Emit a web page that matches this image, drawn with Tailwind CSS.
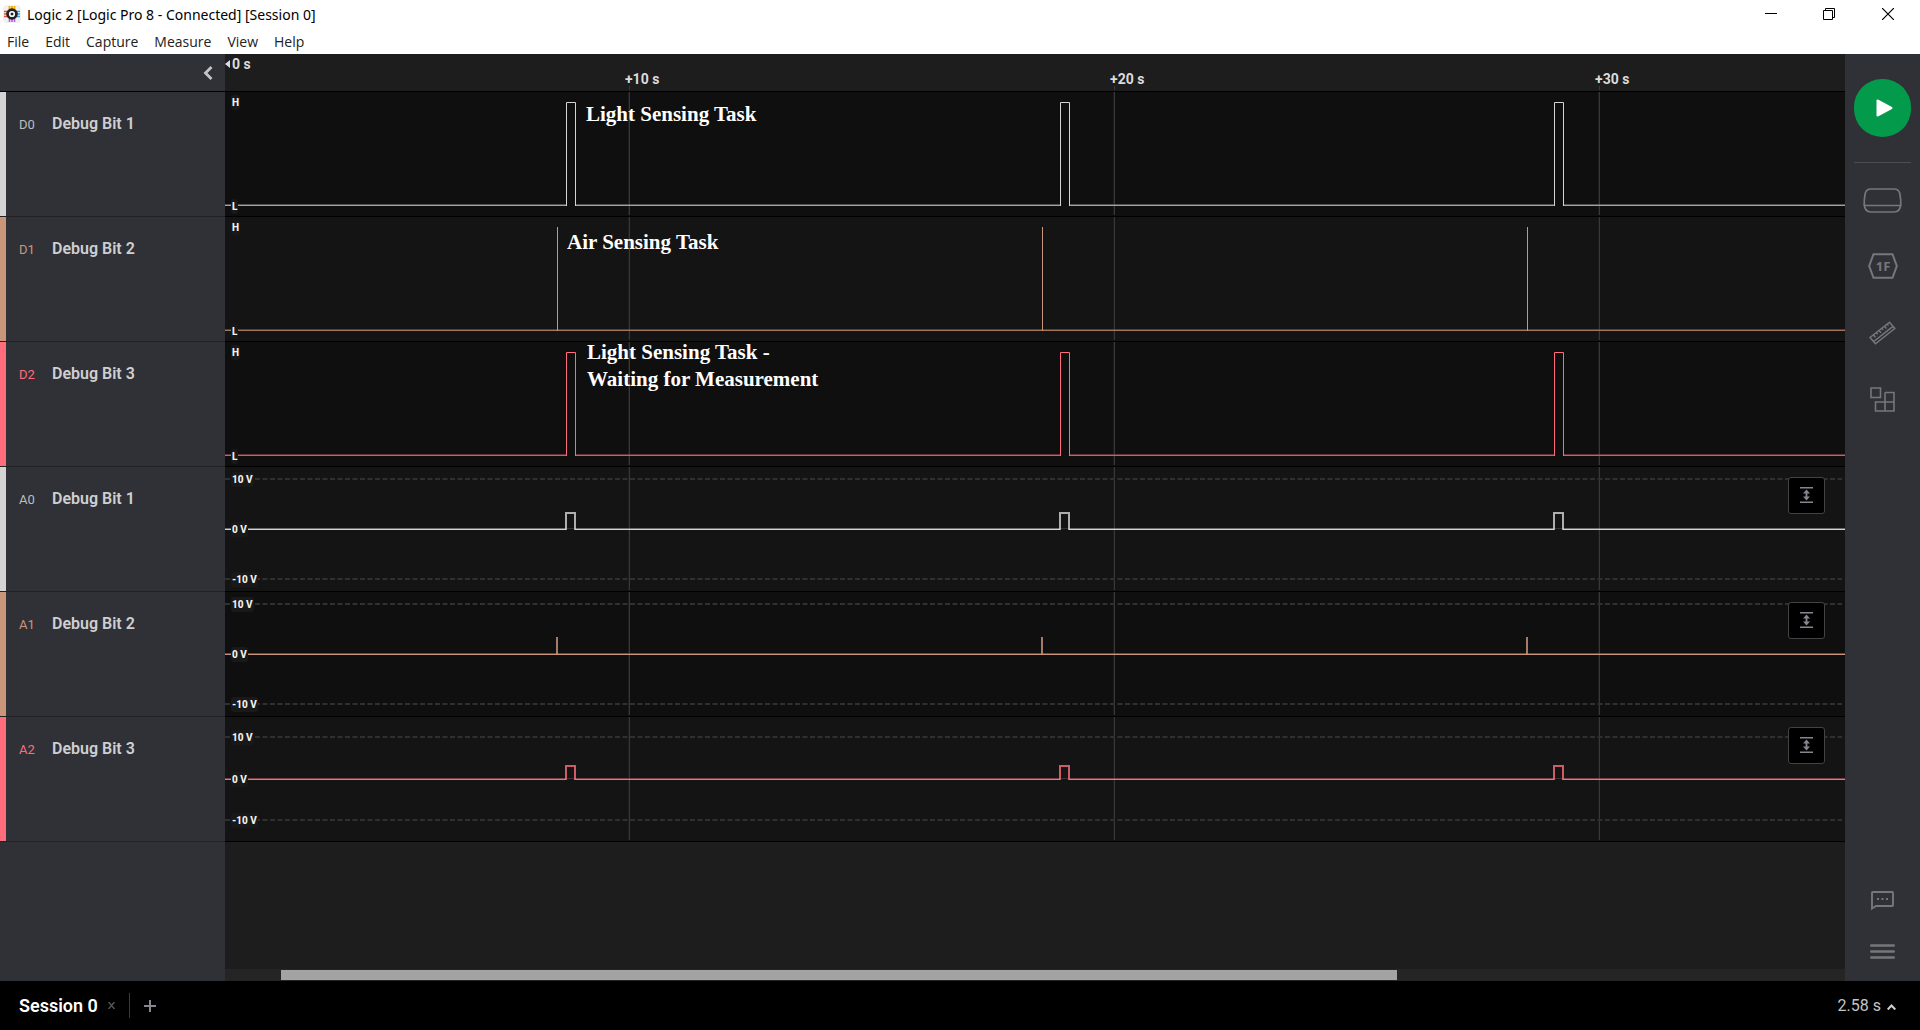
<!DOCTYPE html>
<html lang="en">
<head>
<meta charset="utf-8">
<meta name="viewport" content="width=device-width, initial-scale=1">
<title>Logic 2 [Logic Pro 8 - Connected] [Session 0]</title>
<script src="https://cdn.jsdelivr.net/npm/@tailwindcss/browser@4"></script>
</head>
<body class="flex min-h-screen flex-col overflow-hidden bg-black font-['Roboto',sans-serif] text-[#cfcfd1]">

<!-- Window title bar and menu -->
<header class="bg-white font-['Open_Sans',sans-serif] text-sm text-black">
  <div class="flex h-7 items-center">
    <svg class="ml-[3px] size-[18px]" viewBox="0 0 18 18" aria-hidden="true">
      <rect width="18" height="18" rx="4" fill="#f1f1f4"/>
      <path d="M6.5 1v3M9 1v3M11.500 1v3" stroke="#f2b705" stroke-width="2"/>
      <path d="M6.500 14v3M9 14v3M11.500 14v3" stroke="#b55cf0" stroke-width="1.600"/>
      <path d="M1 6.500h3M1 9h3M1 11.500h3" stroke="#e8503a" stroke-width="1.600"/>
      <path d="M14 6.500h3M14 9h3M14 11.500h3" stroke="#2d9fe8" stroke-width="1.600"/>
      <circle cx="9" cy="9" r="5.800" fill="#222226"/>
      <circle cx="9" cy="9" r="2.300" fill="#222226" stroke="#fff" stroke-width="1.600"/>
    </svg>
    <h1 class="ml-[6px] flex-1 pt-px font-['Noto_Sans',sans-serif]">Logic 2 [Logic Pro 8 - Connected] [Session 0]</h1>
    <button type="button" aria-label="Minimize" class="grid h-7 w-[58px] place-items-center"><svg class="size-3" viewBox="0 0 12 12"><path d="M0 5.500h12" stroke="#000"/></svg></button>
    <button type="button" aria-label="Restore" class="grid h-7 w-[58px] place-items-center"><svg class="size-3" viewBox="0 0 12 12" fill="none" stroke="#000"><path d="M.5 2.500h9v9h-9zM2.500 2.500v-2h9v9h-2"/></svg></button>
    <button type="button" aria-label="Close" class="mr-[2px] grid h-7 w-[60px] place-items-center"><svg class="size-3" viewBox="0 0 12 12" stroke="#000" stroke-width="1.200"><path d="M0 0l12 12M12 0L0 12"/></svg></button>
  </div>
  <nav class="flex h-[26px] items-end pb-[2px] pl-[7px] text-[#222]">
    <button type="button" class="mr-4">File</button>
    <button type="button" class="mr-4">Edit</button>
    <button type="button" class="mr-4">Capture</button>
    <button type="button" class="mr-4">Measure</button>
    <button type="button" class="mr-4">View</button>
    <button type="button">Help</button>
  </nav>
</header>

<main class="flex flex-1">
  <!-- Channel list -->
  <aside class="flex w-[225px] shrink-0 flex-col bg-[#303136]">
    <div class="flex h-[38px] items-center justify-end border-b border-black pr-3">
      <button type="button" aria-label="Collapse sidebar"><svg class="h-[14px] w-[10px]" viewBox="0 0 10 14" fill="none" stroke="#c4c4c6" stroke-width="2.800"><path d="M8.500 1L2.500 7l6 6"/></svg></button>
    </div>
    <ul id="channels"></ul>
  </aside>

  <!-- Timeline -->
  <section class="flex min-w-0 flex-1 flex-col bg-[#1d1d1d]">
    <div class="relative h-[38px] border-b border-black text-sm font-bold leading-4 text-[#dcdcdc]">
      <div class="flex items-center gap-[2px] pt-[2px]">
        <svg class="h-2 w-[5px]" viewBox="0 0 5 8"><path d="M5 0v8L0 4z" fill="#dcdcdc"/></svg>0 s
      </div>
      <div id="ticks"></div>
    </div>
    <div id="plots"></div>
    <div class="mt-auto flex h-3 items-center bg-[#252525]">
      <div class="ml-[3.460%] h-[10px] w-[68.890%] bg-[#a3a3a3]"></div>
    </div>
  </section>

  <!-- Tool rail -->
  <aside class="flex w-[75px] shrink-0 flex-col items-center bg-[#303136] pb-[5px] text-[#76777b]">
    <button type="button" aria-label="Start capture" class="mt-[25px] grid h-[58px] w-[57px] place-items-center rounded-[28px] bg-[#049a4c]">
      <svg class="ml-1 h-[18px] w-[17px]" viewBox="0 0 17 18"><path d="M1.500 1.500v15L15.500 9z" fill="#fff" stroke="#fff" stroke-width="2" stroke-linejoin="round"/></svg>
    </button>
    <div class="mt-[25px] mb-1 h-px w-[57px] bg-[#4b4c50]"></div>
    <button type="button" aria-label="Device settings" class="grid h-[66px] w-full place-items-center">
      <svg class="h-[25px] w-[39px]" viewBox="0 0 39 25" fill="none" stroke="currentColor" stroke-width="1.700"><path d="M8 1h23c3.500 0 5.200 1.600 5.800 4.500.9 4.500 1.200 7.500 1 12H1.200c-.2-4.500.1-7.500 1-12C2.800 2.600 4.500 1 8 1zM1.200 16c.3 5 1.800 8 6.800 8h23c5 0 6.500-3 6.800-8"/></svg>
    </button>
    <button type="button" aria-label="Analyzers" class="grid h-[66px] w-full place-items-center">
      <svg class="h-[26px] w-[30px]" viewBox="0 0 30 26"><path d="M5.500 1.200h19L28.800 13l-4.300 11.800h-19L1.200 13z" fill="none" stroke="currentColor" stroke-width="2"/><text x="15" y="17.500" text-anchor="middle" fill="currentColor" font-family="Open Sans, sans-serif" font-size="13" font-weight="700">1F</text></svg>
    </button>
    <button type="button" aria-label="Measurements" class="grid h-[67px] w-full place-items-center">
      <svg class="h-[24px] w-[27px]" viewBox="0 0 27 24" fill="none" stroke="currentColor" stroke-width="1.500"><path d="M1 16.500L20.500 1.200l5.300 6.300L6.500 22.800zM4.700 20.500L24 5.300M4.500 14l2 2.300M7.300 11.700l1.300 1.600M10 9.500l2 2.300M12.800 7.300l1.300 1.600M15.500 5.200l2 2.200M18.200 3l1.300 1.600"/></svg>
    </button>
    <button type="button" aria-label="Extensions" class="grid h-[67px] w-full place-items-center">
      <svg class="size-[25px]" viewBox="0 0 25 25" fill="none" stroke="currentColor" stroke-width="1.600"><path d="M1 1h9.500v9.500H1zM15 5.500h9v18.500H5.500v-9h18.500M15 5.500v18.500"/></svg>
    </button>
    <button type="button" aria-label="Feedback" class="mt-auto grid h-[50px] w-full place-items-center">
      <svg class="h-[20px] w-[23px]" viewBox="0 0 23 20"><path d="M1 17.500V1.800Q1 1 1.800 1h19.400q.8 0 .8.800v12.400q0 .8-.8.800H5z" fill="none" stroke="currentColor" stroke-width="1.900"/><path d="M6 7h2v2H6zM10.500 7h2v2h-2zM15 7h2v2h-2z" fill="currentColor"/></svg>
    </button>
    <button type="button" aria-label="Menu" class="grid h-[50px] w-full place-items-center">
      <svg class="h-[15px] w-[25px]" viewBox="0 0 25 15" stroke="currentColor" stroke-width="2.600" stroke-linecap="round"><path d="M1.300 1.500h22.400M1.300 7.500h22.400M1.300 13.500h22.400"/></svg>
    </button>
  </aside>
</main>

<!-- Session tabs and status -->
<footer class="flex h-[49px] items-center bg-black pl-[19px] pr-6">
  <button type="button" class="text-lg font-semibold text-white">Session 0</button>
  <button type="button" aria-label="Close session" class="ml-[10px]"><svg class="size-[7px]" viewBox="0 0 7 7" stroke="#55565a" stroke-width="1.400"><path d="M.5 0l6 7M6.500 0l-6 7"/></svg></button>
  <div class="ml-[14px] h-[25px] w-px bg-[#3a3a3d]"></div>
  <button type="button" aria-label="New session" class="ml-[14px]"><svg class="size-3" viewBox="0 0 12 12" stroke="#85868f" stroke-width="2"><path d="M6 0v12M0 6h12"/></svg></button>
  <button type="button" class="ml-auto flex items-center gap-[6px] text-base text-[#c4c4c6]">2.58 s
    <svg class="mt-[3px] h-[6px] w-[9px]" viewBox="0 0 9 6" fill="none" stroke="#d0d0d2" stroke-width="2"><path d="M.7 5.500L4.500 1.500l3.800 4"/></svg>
  </button>
</footer>

<script>
  const SPAN = 1620;
  const GRID = [404, 889, 1374];
  const WIDE = [[341, 350], [835, 844], [1329, 1338]];
  const THIN = [[332, 332], [817, 817], [1302, 1302]];
  const pct = x => (x / SPAN * 100).toFixed(3) + '%';

  const channels = [
    { id: 'D0', name: 'Debug Bit 1', color: '#d4d4d4', flat: '#a3a3a3', text: 'text-[#bdbdc0]', bar: 'bg-[#d4d4d4]', pulses: WIDE, hi: 10, lo: 113, note: ['Light Sensing Task'], noteX: 361, noteY: 'top-[9px]' },
    { id: 'D1', name: 'Debug Bit 2', color: '#c9967b', flat: '#a3765f', text: 'text-[#c9967b]', bar: 'bg-[#c9967b]', pulses: THIN, hi: 10, lo: 113, note: ['Air Sensing Task'], noteX: 342, noteY: 'top-[12px]' },
    { id: 'D2', name: 'Debug Bit 3', color: '#ff6d7d', flat: '#d4596a', text: 'text-[#ff6d7d]', bar: 'bg-[#ff6d7d]', pulses: WIDE, hi: 10, lo: 113, note: ['Light Sensing Task -', 'Waiting for Measurement'], noteX: 362, noteY: 'top-[-3px]' },
    { id: 'A0', name: 'Debug Bit 1', color: '#d4d4d4', flat: '#d4d4d4', text: 'text-[#bdbdc0]', bar: 'bg-[#d4d4d4]', pulses: WIDE, hi: 45, lo: 62, ref: [12, 112] },
    { id: 'A1', name: 'Debug Bit 2', color: '#c9967b', flat: '#c9967b', text: 'text-[#c9967b]', bar: 'bg-[#c9967b]', pulses: THIN, hi: 45, lo: 62, ref: [12, 112] },
    { id: 'A2', name: 'Debug Bit 3', color: '#ff6d7d', flat: '#ff6d7d', text: 'text-[#ff6d7d]', bar: 'bg-[#ff6d7d]', pulses: WIDE, hi: 48, lo: 62, ref: [20, 103] }
  ];

  document.getElementById('channels').innerHTML = channels.map(c => `
    <li class="flex h-[125px] border-b border-[#222224]">
      <span class="w-[6px] ${c.bar}"></span>
      <span class="flex h-[63px] items-center pl-[13px]">
        <span class="w-[33px] pt-[2px] text-[13px] ${c.text}">${c.id}</span>
        <span class="text-base font-semibold text-[#cfcfd1]">${c.name}</span>
      </span>
    </li>`).join('');

  document.getElementById('ticks').innerHTML = GRID.map((x, i) => `
    <span class="absolute top-[17px] -ml-[4px]" style="left:${pct(x)}">+${(i + 1) * 10} s</span>
    <span class="absolute top-8 h-1 w-px bg-[#3a3a3a]" style="left:${pct(x)}"></span>`).join('');

  const line = (x1, y1, x2, y2, stroke, extra = '') =>
    `<line x1="${x1}" y1="${y1}" x2="${x2}" y2="${y2}" stroke="${stroke}" vector-effect="non-scaling-stroke" ${extra}/>`;

  const label = (y, text) =>
    `<span class="absolute left-[6px] -mt-[7px] rounded-[3px] bg-[#191919] px-px text-[10px] font-extrabold leading-[15px] text-[#f2f2f2]" style="top:${y}px">${text}</span>`;

  document.getElementById('plots').innerHTML = channels.map((c, row) => {
    const analog = !!c.ref;
    const flats = [];
    let from = 0;
    c.pulses.forEach(([a, b]) => { flats.push([from, a]); from = b; });
    flats.push([from, SPAN]);
    const y = c.lo + 0.5;
    const w = analog ? 'stroke-width="2" stroke-opacity=".8"' : '';
    const shift = analog ? 0 : 0.5;
    const svg = [
      ...GRID.map(x => line(x + 0.5, 0, x + 0.5, 123, '#383838') + line(x - 0.5, 0, x - 0.5, 123, '#1c1c1c')),
      ...(c.ref || []).map(r => line(0, r, SPAN - 3, r, '#303030', 'stroke-width="2" stroke-dasharray="5 2.5"')),
      ...flats.map(([a, b]) => line(a, y - 1, b, y - 1, c.flat, 'stroke-opacity=".45"')),
      ...(analog ? c.pulses.map(([a, b]) => line(a, y - 1, b, y - 1, '#33333a')) : []),
      ...flats.map(([a, b]) => line(a, y, b, y, c.flat)),
      ...c.pulses.map(([a, b]) => a === b
        ? line(a + shift, c.hi, a + shift, c.lo + 1, c.color, w)
        : `<path d="M${a + shift} ${c.lo + 1}V${c.hi + (analog ? 1 : 0.5)}H${b + shift}V${c.lo + 1}" fill="none" stroke="${c.color}" vector-effect="non-scaling-stroke" ${w}/>`)
    ].join('');
    const labels = analog
      ? label(c.ref[0], '10 V') + label(c.lo, '0 V') + label(c.ref[1], '-10 V')
      : label(10, 'H') + label(114, 'L');
    const note = c.note
      ? `<p class="absolute ${c.noteY} whitespace-nowrap font-['Liberation_Serif',serif] text-[21px] font-bold leading-[27px] text-white" style="left:${pct(c.noteX)}">${c.note.join('<br>')}</p>` : '';
    const fit = analog
      ? `<button type="button" aria-label="Fit ${c.id} vertically" class="absolute top-[10px] right-5 grid size-[37px] place-items-center rounded-[3px] border border-[#434347] bg-black pb-px">
           <svg class="h-4 w-[13px]" viewBox="0 0 13 16" fill="#85868f"><path d="M0 0h13v1.600H0zM0 14.400h13V16H0zM6.500 2.500L10 6.500H7.400v3H10l-3.500 4-3.500-4h2.600v-3H3z"/></svg>
         </button>` : '';
    return `<div class="relative h-[125px] border-b border-black ${row % 2 ? 'bg-[#141414]' : 'bg-[#0f0f0f]'}">
      <svg class="block h-[124px] w-full" viewBox="0 0 1620 124" preserveAspectRatio="none">${svg}</svg>
      ${labels}${note}${fit}
    </div>`;
  }).join('');
</script>
</body>
</html>
